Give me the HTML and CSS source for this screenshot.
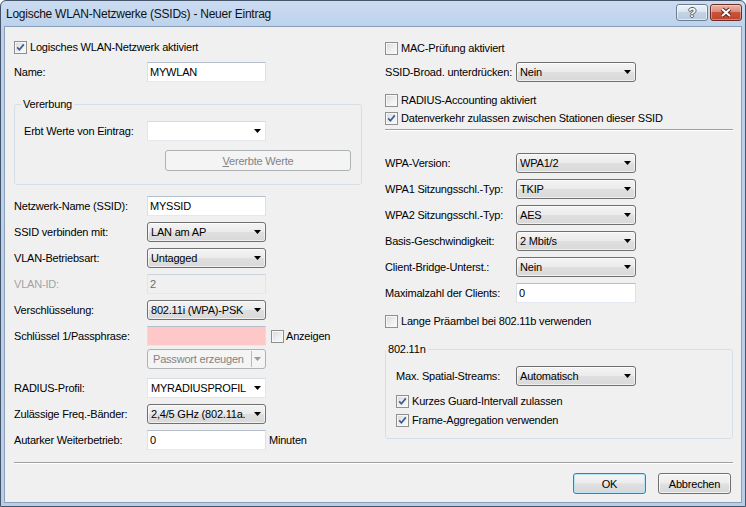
FILE: index.html
```html
<!DOCTYPE html>
<html lang="de">
<head>
<meta charset="utf-8">
<title>Logische WLAN-Netzwerke (SSIDs) - Neuer Eintrag</title>
<link rel="stylesheet" href="styles.css">
</head>
<body>
<div class="window">
  <div class="titlebar">
    <span class="title">Logische WLAN-Netzwerke (SSIDs) - Neuer Eintrag</span>
    <div class="caption">
      <span class="cap-btn help">?</span>
      <span class="cap-btn close"><svg width="14" height="11" viewBox="0 0 14 11"><path d="M3 2L11 9M11 2L3 9" stroke="#5a261d" stroke-width="4" fill="none"/><path d="M3 2L11 9M11 2L3 9" stroke="#fff" stroke-width="2" fill="none"/></svg></span>
    </div>
  </div>
  <div class="client">
    <div class="columns">
      <div class="col col-left">
        <div class="check tall"><span class="cb checked"><svg viewBox="0 0 11 11" width="11" height="11"><path d="M2.2 5.4L4.4 7.8L8.8 2.4" fill="none" stroke="#3d5a96" stroke-width="1.7"/></svg></span>Logisches WLAN-Netzwerk aktiviert</div>
        <div class="row mt5"><span class="lbl">Name:</span><span class="edit ctl">MYWLAN</span></div>
        <div class="group g-inherit">
          <div class="group-title">Vererbung</div>
          <div class="row mt10"><span class="lbl">Erbt Werte von Eintrag:</span><span class="combo white ctl"></span></div>
          <div class="pbtn disabled inherit-btn"><span><u>V</u>ererbte Werte</span></div>
        </div>
        <div class="row mt11"><span class="lbl">Netzwerk-Name (SSID):</span><span class="edit ctl">MYSSID</span></div>
        <div class="row"><span class="lbl">SSID verbinden mit:</span><span class="combo ctl">LAN am AP</span></div>
        <div class="row"><span class="lbl">VLAN-Betriebsart:</span><span class="combo ctl">Untagged</span></div>
        <div class="row"><span class="lbl dis">VLAN-ID:</span><span class="edit ctl disabled">2</span></div>
        <div class="row"><span class="lbl">Verschlüsselung:</span><span class="combo ctl">802.11i (WPA)-PSK</span></div>
        <div class="row"><span class="lbl">Schlüssel 1/Passphrase:</span><span class="edit ctl invalid"></span><span class="check inline-check"><span class="cb"></span>Anzeigen</span></div>
        <div class="row mt3"><span class="lbl"></span><span class="split ctl"><span class="split-text">Passwort erzeugen</span><span class="split-sep"></span><span class="split-arrow"></span></span></div>
        <div class="row mt9"><span class="lbl">RADIUS-Profil:</span><span class="combo white ctl">MYRADIUSPROFIL</span></div>
        <div class="row"><span class="lbl">Zulässige Freq.-Bänder:</span><span class="combo ctl">2,4/5 GHz (802.11a.</span></div>
        <div class="row"><span class="lbl">Autarker Weiterbetrieb:</span><span class="edit ctl">0</span><span class="unit">Minuten</span></div>
      </div>
      <div class="col col-right">
        <div class="check tall"><span class="cb"></span>MAC-Prüfung aktiviert</div>
        <div class="row mt4"><span class="lbl">SSID-Broad. unterdrücken:</span><span class="combo ctl">Nein</span></div>
        <div class="check mt9"><span class="cb"></span>RADIUS-Accounting aktiviert</div>
        <div class="check"><span class="cb checked"><svg viewBox="0 0 11 11" width="11" height="11"><path d="M2.2 5.4L4.4 7.8L8.8 2.4" fill="none" stroke="#3d5a96" stroke-width="1.7"/></svg></span>Datenverkehr zulassen zwischen Stationen dieser SSID</div>
        <div class="sep mt2"></div>
        <div class="row mt22"><span class="lbl">WPA-Version:</span><span class="combo ctl">WPA1/2</span></div>
        <div class="row"><span class="lbl">WPA1 Sitzungsschl.-Typ:</span><span class="combo ctl">TKIP</span></div>
        <div class="row"><span class="lbl">WPA2 Sitzungsschl.-Typ:</span><span class="combo ctl">AES</span></div>
        <div class="row"><span class="lbl">Basis-Geschwindigkeit:</span><span class="combo ctl">2 Mbit/s</span></div>
        <div class="row"><span class="lbl">Client-Bridge-Unterst.:</span><span class="combo ctl">Nein</span></div>
        <div class="row"><span class="lbl">Maximalzahl der Clients:</span><span class="edit ctl">0</span></div>
        <div class="check mt9"><span class="cb"></span>Lange Präambel bei 802.11b verwenden</div>
        <div class="group g-11n">
          <div class="group-title">802.11n</div>
          <div class="row mt10"><span class="lbl">Max. Spatial-Streams:</span><span class="combo ctl">Automatisch</span></div>
          <div class="check mt6"><span class="cb checked"><svg viewBox="0 0 11 11" width="11" height="11"><path d="M2.2 5.4L4.4 7.8L8.8 2.4" fill="none" stroke="#3d5a96" stroke-width="1.7"/></svg></span>Kurzes Guard-Intervall zulassen</div>
          <div class="check mt1"><span class="cb checked"><svg viewBox="0 0 11 11" width="11" height="11"><path d="M2.2 5.4L4.4 7.8L8.8 2.4" fill="none" stroke="#3d5a96" stroke-width="1.7"/></svg></span>Frame-Aggregation verwenden</div>
        </div>
      </div>
    </div>
    <div class="sep mt12"></div>
    <div class="footer">
      <div class="pbtn default">OK</div>
      <div class="pbtn">Abbrechen</div>
    </div>
  </div>
</div>
</body>
</html>
```

FILE: styles.css
```css
* { box-sizing: border-box; }
body {
  margin: 0;
  font-family: "Liberation Sans", Arial, sans-serif;
  font-size: 11px;
  letter-spacing: -0.2px;
  color: #000;
  background: #fff;
}
.window {
  width: 746px;
  height: 507px;
  border: 1px solid #44556b;
  border-radius: 6px 6px 0 0;
  background: linear-gradient(to bottom, #cbdcf1 0, #bcd2ec 26px, #b9cfe9 100%);
  padding: 0 3px 3px;
  display: flex;
  flex-direction: column;
}
.titlebar {
  height: 25px;
  flex: none;
  display: flex;
  align-items: center;
  padding-left: 2px;
}
.title {
  flex: 1;
  font-size: 12px;
  letter-spacing: -0.25px;
  line-height: 14px;
  padding-top: 1px;
  color: #111;
}
.caption {
  align-self: flex-start;
  margin-top: 3px;
  display: flex;
  gap: 2px;
}
.cap-btn {
  width: 32px;
  height: 17px;
  border-radius: 3px;
  display: flex;
  align-items: center;
  justify-content: center;
}
.help {
  border: 1px solid #6c7e94;
  background: linear-gradient(#edf2f8, #dbe5f0 45%, #c4d4e6 50%, #b8cade);
  box-shadow: inset 0 0 0 1px rgba(255, 255, 255, 0.55);
  color: #fff;
  font-weight: bold;
  font-size: 13px;
  line-height: 13px;
  text-shadow: 1px 0 #4e5d70, -1px 0 #4e5d70, 0 1px #4e5d70, 0 -1px #4e5d70;
}
.close {
  border: 1px solid #6e2d23;
  background: linear-gradient(#ebb5a8, #dc8c78 45%, #c9543b 50%, #c1432d);
  box-shadow: inset 0 0 0 1px rgba(255, 255, 255, 0.35);
}
.client {
  flex: 1;
  background: #f0f0f0;
  border: 1px solid #8b9fb8;
  padding: 0 8px 0 9px;
  display: flex;
  flex-direction: column;
}
.columns {
  display: flex;
  gap: 23px;
  align-items: flex-start;
}
.col {
  width: 348px;
  display: flex;
  flex-direction: column;
}
.col-left { padding-top: 10px; }
.col-right { padding-top: 11px; }

.row {
  display: flex;
  align-items: center;
  height: 20px;
  margin-top: 6px;
  flex: none;
}
.lbl { flex: none; white-space: nowrap; }
.col-left > .row .lbl { width: 133px; }
.col-right > .row .lbl { width: 131px; }
.g-inherit .lbl { width: 123px; }
.g-11n .lbl { width: 120px; }
.lbl.dis { color: #a3a3a3; }

.col-left .ctl { width: 119px; }
.col-right .ctl { width: 120px; }

.mt1 { margin-top: 1px; }
.mt2 { margin-top: 2px; }
.mt3 { margin-top: 3px; }
.mt4 { margin-top: 4px; }
.mt5 { margin-top: 5px; }
.mt6 { margin-top: 6px; }
.mt9 { margin-top: 9px; }
.mt10 { margin-top: 10px; }
.mt11 { margin-top: 11px; }
.mt12 { margin-top: 12px; }
.mt22 { margin-top: 22px; }

.check {
  display: flex;
  align-items: center;
  height: 18px;
  flex: none;
  white-space: nowrap;
}
.check.tall { height: 20px; }
.cb {
  width: 13px;
  height: 13px;
  flex: none;
  margin-right: 3px;
  border: 1px solid #8e8f8f;
  background: linear-gradient(135deg, #d6d8db 0%, #eeeff0 55%, #fbfbfb 100%);
  box-shadow: inset 0 0 0 1px #f7f7f7;
  display: flex;
  align-items: center;
  justify-content: center;
}
.cb svg { display: block; }
.inline-check { margin-left: 5px; }
.inline-check .cb { margin-right: 2px; }
.unit { margin-left: 3px; }

.edit {
  height: 20px;
  display: flex;
  align-items: center;
  padding-left: 2px;
  background: #fff;
  border: 1px solid;
  border-color: #b4bfcb #d9e0e8 #e3e9ef #d9e0e8;
}
.edit.disabled {
  background: #f0f0f0;
  color: #6d6d6d;
  border-color: #cdd3da #e2e5e9 #e6e9ec #e2e5e9;
}
.edit.invalid { background: #ffc8c8; }

.combo {
  height: 20px;
  display: flex;
  align-items: center;
  padding-left: 3px;
  border: 1px solid #707070;
  border-radius: 3px;
  background: linear-gradient(#f4f4f4, #ebebeb 48%, #dfdfdf 52%, #d9d9d9);
  box-shadow: inset 0 0 0 1px rgba(255, 255, 255, 0.6);
  white-space: nowrap;
}
.combo::after {
  content: "";
  width: 7px;
  height: 4px;
  margin-left: auto;
  margin-right: 4px;
  background: #000;
  clip-path: polygon(0 0, 100% 0, 50% 100%);
  flex: none;
}
.combo.white {
  background: #fff;
  border-radius: 0;
  box-shadow: none;
  border-color: #d6dbe1 #e3e7eb #e3e7eb #e3e7eb;
}

.split {
  height: 20px;
  display: flex;
  align-items: center;
  padding-left: 5px;
  border: 1px solid #adb2b5;
  border-radius: 3px;
  background: #f4f4f4;
  color: #838383;
  white-space: nowrap;
}
.split-text { flex: 1; }
.split-sep {
  width: 1px;
  height: 16px;
  background: #b9b9b9;
  margin-right: 2px;
}
.split-arrow {
  width: 7px;
  height: 4px;
  margin-right: 4px;
  background: #9a9a9a;
  clip-path: polygon(0 0, 100% 0, 50% 100%);
}

.group {
  border: 1px solid #d5dfe5;
  border-radius: 3px;
  display: flex;
  flex-direction: column;
  flex: none;
}
.group-title {
  align-self: flex-start;
  margin-top: -7px;
  height: 13px;
  line-height: 13px;
  padding: 0 2px;
  background: #f0f0f0;
}
.g-inherit {
  margin-top: 22px;
  padding: 0 0 13px 9px;
}
.g-inherit .group-title { margin-left: -3px; }
.g-11n {
  margin-top: 19px;
  padding: 0 0 9px 10px;
}
.g-11n .group-title { margin-left: -10px; }

.pbtn {
  height: 21px;
  width: 73px;
  display: flex;
  align-items: center;
  justify-content: center;
  border: 1px solid #707070;
  border-radius: 3px;
  background: linear-gradient(#f5f5f5, #ececec 48%, #e0e0e0 52%, #d7d7d7);
  box-shadow: inset 0 0 0 1px rgba(255, 255, 255, 0.7);
}
.pbtn.default {
  border-color: #3c7fb1;
  box-shadow: inset 0 0 0 1px #b7e3f8;
}
.pbtn.disabled {
  border-color: #adb2b5;
  background: #f4f4f4;
  box-shadow: none;
  color: #838383;
}
.inherit-btn {
  width: 186px;
  margin-top: 9px;
  margin-left: 141px;
}

.sep {
  height: 2px;
  flex: none;
  border-top: 1px solid #a0a0a0;
  border-bottom: 1px solid #fff;
}
.footer {
  display: flex;
  justify-content: flex-end;
  gap: 12px;
  margin-top: 9px;
  margin-right: 2px;
}
```
